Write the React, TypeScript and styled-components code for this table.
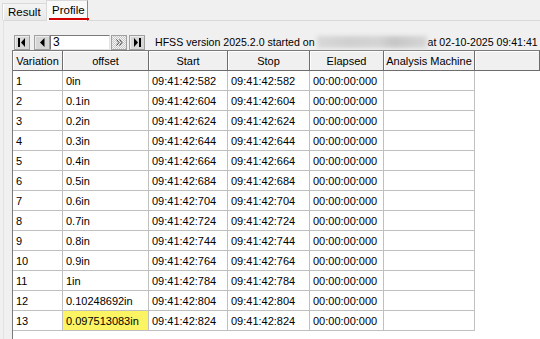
import React, { FC } from 'react';
import styled, { createGlobalStyle, css } from 'styled-components';

const GlobalStyle = createGlobalStyle`
  html, body {
    margin: 0;
    padding: 0;
    background: #f0f0f0;
  }
  body {
    font-family: 'Liberation Sans', Arial, sans-serif;
    font-size: 11px;
    color: #000;
  }
`;

// data for the profile grid
type ProfileRow = {
  variation: number;
  offset: string;
  ms: string;
};

const rows: ProfileRow[] = [
  { variation: 1, offset: '0in', ms: '582' },
  { variation: 2, offset: '0.1in', ms: '604' },
  { variation: 3, offset: '0.2in', ms: '624' },
  { variation: 4, offset: '0.3in', ms: '644' },
  { variation: 5, offset: '0.4in', ms: '664' },
  { variation: 6, offset: '0.5in', ms: '684' },
  { variation: 7, offset: '0.6in', ms: '704' },
  { variation: 8, offset: '0.7in', ms: '724' },
  { variation: 9, offset: '0.8in', ms: '744' },
  { variation: 10, offset: '0.9in', ms: '764' },
  { variation: 11, offset: '1in', ms: '784' },
  { variation: 12, offset: '0.10248692in', ms: '804' },
  { variation: 13, offset: '0.097513083in', ms: '824' },
];

const columns = ['Variation', 'offset', 'Start', 'Stop', 'Elapsed', 'Analysis Machine'];

// Styled components
const Window = styled.div`
  width: 540px;
  height: 339px;
  display: flex;
  flex-direction: column;
  overflow: hidden;
  background: #f0f0f0;
`;

const TabBar = styled.div`
  height: 20px;
  display: flex;
  align-items: flex-end;
  padding-left: 2px;
`;

const Tab = styled.div<{ $active?: boolean }>`
  position: relative;
  box-sizing: border-box;
  display: flex;
  align-items: center;
  ${(p) =>
    p.$active
      ? css`
          height: 21px;
          margin-bottom: -1px;
          width: 42px;
          padding: 0 0 2px 5px;
          background: #f9f9f9;
          border: 1px solid #d9d9d9;
          border-right: 1px solid #8c8c8c;
          border-bottom: none;
          z-index: 1;
        `
      : css`
          height: 17px;
          width: 44px;
          padding: 0 0 0 5px;
          background: linear-gradient(#f4f4f4, #e8e8e8);
          border: 1px solid #d9d9d9;
          border-right: none;
          border-bottom: none;
          box-shadow: inset 1px 0 #fff;
        `}
`;

const TabLabel = styled.span<{ $underline?: boolean }>`
  position: relative;
  font-size: 11.5px;
  ${(p) =>
    p.$underline &&
    css`
      &::after {
        content: '';
        position: absolute;
        left: -3px;
        right: -4px;
        bottom: -4px;
        height: 2px;
        background: #d20000;
      }
    `}
`;

const Panel = styled.div`
  flex: 1;
  display: flex;
  flex-direction: column;
  margin-left: 3px;
  border-top: 1px solid #d9d9d9;
  border-left: 1px solid #e3e3e3;
  padding: 13px 0 0 8px;
  min-height: 0;
`;

const Toolbar = styled.div`
  height: 16px;
  display: flex;
  align-items: center;
  padding-left: 2px;
`;

const NavButton = styled.div<{ $pressed?: boolean; $gap?: number }>`
  box-sizing: border-box;
  flex-shrink: 0;
  width: 16px;
  height: 15px;
  margin-right: ${(p) => p.$gap ?? 0}px;
  display: flex;
  align-items: center;
  justify-content: center;
  border: 1px solid #a0a0a0;
  ${(p) =>
    p.$pressed
      ? css`
          background-color: #fff;
          background-image: repeating-conic-gradient(#c8c8c8 0 25%, #f4f4f4 0 50%);
          background-size: 2px 2px;
        `
      : css`
          background: #d6d6d6;
          box-shadow: inset 1px 1px #ececec;
        `}
`;

const PageBox = styled.div`
  box-sizing: border-box;
  flex-shrink: 0;
  width: 60px;
  height: 15px;
  margin-right: 1px;
  background: #fff;
  border: 1px solid #7a7a7a;
  border-right-color: #e3e3e3;
  border-bottom-color: #e3e3e3;
  padding-left: 2px;
  line-height: 13px;
  font-size: 12px;
`;

const StatusText = styled.div`
  margin-left: 10px;
  flex-shrink: 0;
  display: flex;
  align-items: center;
  white-space: nowrap;
  font-size: 10.6px;
`;

const Blurred = styled.span`
  display: inline-block;
  width: 110px;
  height: 12px;
  margin: 0 1px 0 2px;
  background: linear-gradient(90deg, #d8d8d8 0%, #cfcfcf 30%, #d4d4d4 55%, #c6c6c6 70%, #d6d6d6 100%);
  filter: blur(2px);
`;

const Grid = styled.div`
  flex: 1;
  display: grid;
  grid-template-columns: 50px 86px 79px 82px 74px 91px 1fr;
  grid-auto-rows: 20px;
  align-content: start;
  background: #fff;
  border-left: 1px solid #7a7a7a;
  border-top: 1px solid #7a7a7a;
`;

const HeaderCell = styled.div`
  box-sizing: border-box;
  background: #f0f0f0;
  border-right: 1px solid #6d6d6d;
  border-bottom: 1px solid #6d6d6d;
  box-shadow: inset 1px 1px #fff;
  display: flex;
  align-items: center;
  justify-content: center;
  white-space: nowrap;
  overflow: hidden;
`;

const Cell = styled.div<{ $selected?: boolean; $filler?: boolean }>`
  box-sizing: border-box;
  display: flex;
  align-items: center;
  padding-left: 3px;
  white-space: nowrap;
  overflow: hidden;
  background: ${(p) => (p.$selected ? '#fcf462' : '#fff')};
  border-right: ${(p) => (p.$filler ? 'none' : '1px solid #c0c0c0')};
  border-bottom: ${(p) => (p.$filler ? 'none' : '1px solid #c0c0c0')};
`;

const FirstIcon: FC = () => (
  <svg width="8" height="9" viewBox="0 0 8 9">
    <rect x="0" y="0" width="2" height="9" fill="#000" />
    <path d="M7 0 L7 9 L3 4.5 Z" fill="#000" />
  </svg>
);

const PrevIcon: FC = () => (
  <svg width="5" height="9" viewBox="0 0 5 9">
    <path d="M4.5 0 L4.5 9 L0 4.5 Z" fill="#000" />
  </svg>
);

const NextIcon: FC = () => (
  <svg width="7" height="7" viewBox="0 0 7 7">
    <path d="M0.5 0.5 L3 3.5 L0.5 6.5 M3.5 0.5 L6 3.5 L3.5 6.5" fill="none" stroke="#404040" strokeWidth="1" />
  </svg>
);

const LastIcon: FC = () => (
  <svg width="8" height="9" viewBox="0 0 8 9">
    <path d="M1 0 L1 9 L5 4.5 Z" fill="#000" />
    <rect x="6" y="0" width="2" height="9" fill="#000" />
  </svg>
);

const App: FC = () => {
  return (
    <>
      <GlobalStyle />
      <Window>
        <TabBar>
          <Tab>
            <TabLabel>Result</TabLabel>
          </Tab>
          <Tab $active>
            <TabLabel $underline>Profile</TabLabel>
          </Tab>
        </TabBar>
        <Panel>
          <Toolbar>
            <NavButton $gap={4}>
              <FirstIcon />
            </NavButton>
            <NavButton>
              <PrevIcon />
            </NavButton>
            <PageBox>3</PageBox>
            <NavButton $pressed $gap={2}>
              <NextIcon />
            </NavButton>
            <NavButton>
              <LastIcon />
            </NavButton>
            <StatusText>
              HFSS version 2025.2.0 started on
              <Blurred />
              at 02-10-2025 09:41:41
            </StatusText>
          </Toolbar>
          <Grid>
            {columns.map((c) => (
              <HeaderCell key={c}>{c}</HeaderCell>
            ))}
            <HeaderCell />
            {rows.map((r) => {
              const time = `09:41:42:${r.ms}`;
              return (
                <React.Fragment key={r.variation}>
                  <Cell>{r.variation}</Cell>
                  <Cell $selected={r.variation === 13}>{r.offset}</Cell>
                  <Cell>{time}</Cell>
                  <Cell>{time}</Cell>
                  <Cell>00:00:00:000</Cell>
                  <Cell />
                  <Cell $filler />
                </React.Fragment>
              );
            })}
          </Grid>
        </Panel>
      </Window>
    </>
  );
};

export default App;
